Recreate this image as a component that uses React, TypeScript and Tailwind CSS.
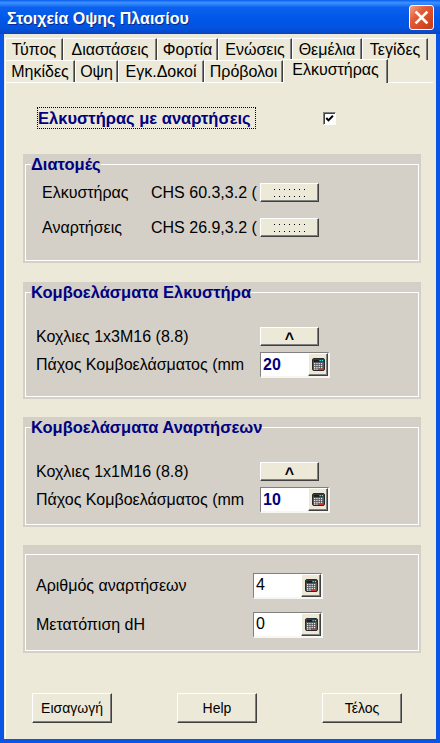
import React from 'react';

const raised =
  'border border-t-white border-l-white border-r-[#404040] border-b-[#404040] shadow-[inset_-1px_-1px_0_#808080] bg-[#ece9d8]';

const row1 = [
  { label: 'Τύπος', w: 'w-[58px]' },
  { label: 'Διαστάσεις', w: 'w-[94px]' },
  { label: 'Φορτία', w: 'w-[61px]' },
  { label: 'Ενώσεις', w: 'w-[74px]' },
  { label: 'Θεμέλια', w: 'w-[70px]' },
  { label: 'Τεγίδες', w: 'w-[66px]' },
];

const row2 = [
  { label: 'Μηκίδες', w: 'w-[70px]' },
  { label: 'Οψη', w: 'w-[43px]' },
  { label: 'Εγκ.Δοκοί', w: 'w-[86px]' },
  { label: 'Πρόβολοι', w: 'w-[79px]' },
  { label: 'Ελκυστήρας', w: 'w-[105px]', selected: true },
];

function Tab({ label, w, selected }: { label: string; w: string; selected?: boolean }) {
  return (
    <div
      className={`${w} flex items-center justify-center whitespace-nowrap border-t border-l border-r border-t-white border-l-white border-r-[#404040] shadow-[inset_-1px_0_0_#808080] text-[16px] text-black ${
        selected ? 'relative z-10 -my-px h-[24px] bg-[#ece9d8] pb-[3px]' : 'h-full'
      }`}
    >
      {label}
    </div>
  );
}

function CalcIcon() {
  const keys = [];
  for (let r = 0; r < 3; r++) {
    for (let c = 0; c < 4; c++) {
      keys.push(<rect key={`${r}-${c}`} x={2 + c * 2.3} y={5 + r * 2} width="1.3" height="1.2" fill="#e8e8e8" />);
    }
  }
  return (
    <svg width="13" height="13" viewBox="0 0 13 13">
      <rect x="0.5" y="0.5" width="12" height="12" rx="1.5" fill="#55585c" stroke="#2a2a2a" />
      <rect x="1.5" y="1.5" width="10" height="2.4" fill="#1c1c1c" />
      <rect x="7.5" y="2" width="1.3" height="1.3" fill="#40f0ff" />
      <rect x="9.7" y="2" width="1.3" height="1.3" fill="#40f0ff" />
      {keys}
      <rect x="6.5" y="10.6" width="4.6" height="1.2" fill="#ff2a2a" />
      <rect x="2" y="10.6" width="1.3" height="1.2" fill="#e8e8e8" />
      <rect x="4.3" y="10.6" width="1.3" height="1.2" fill="#e8e8e8" />
    </svg>
  );
}

function CalcInput({ value, bold }: { value: string; bold?: boolean }) {
  return (
    <div className="flex h-[26px] w-[70px] border-t border-l border-r-2 border-b-2 border-t-[#808080] border-l-[#808080] border-r-[#f7f6f0] border-b-[#f7f6f0] bg-white">
      <div
        className={`flex flex-1 items-center pl-[2px] text-[16px] leading-none ${
          bold ? 'font-bold text-[#000080]' : 'text-black'
        }`}
      >
        {value}
      </div>
      <div className={`${raised} flex w-[20px] items-center justify-center`}>
        <CalcIcon />
      </div>
    </div>
  );
}

function DotButton() {
  const dots = [];
  for (let r = 0; r < 2; r++) {
    for (let c = 0; c < 7; c++) {
      dots.push(<rect key={`${r}-${c}`} x={c * 5} y={r * 7} width="1" height="1" fill="#000" />);
    }
  }
  return (
    <div className={`${raised} flex h-[19px] w-[59px] items-center justify-center`}>
      <svg width="31" height="8" viewBox="0 0 31 8">
        {dots}
      </svg>
    </div>
  );
}

function CaretButton() {
  return (
    <div className={`${raised} flex h-[19px] w-[59px] items-center justify-center pt-[4px] text-[16px] font-bold leading-none`}>
      ^
    </div>
  );
}

function Group({ legend, h, children }: { legend?: string; h: string; children: React.ReactNode }) {
  return (
    <div className={`w-[398px] ${h} bg-[#d4d0c8] px-[2px] pb-[2px] ${legend ? 'pt-[1px]' : 'pt-[9px]'}`}>
      <fieldset className="h-full border border-white pl-[5px]">
        {legend && <legend className="text-[16.5px] font-bold leading-[18px] text-[#000080]">{legend}</legend>}
        {children}
      </fieldset>
    </div>
  );
}

export default function App() {
  return (
    <div className="flex h-[743px] w-[440px] flex-col bg-[#0b55e6] font-['Liberation_Sans',Arial,sans-serif]">
      {/* title bar */}
      <div className="flex h-[34px] shrink-0 items-center justify-between bg-[linear-gradient(to_bottom,#0a5ef0_0%,#3d93ff_8%,#0c61ee_22%,#0057e8_55%,#0352dc_85%,#0a44c0_100%)] pl-[7px] pr-[6px]">
        <span className="mt-[4px] text-[16px] font-bold text-white [text-shadow:1px_1px_0_#0a2a8a]">
          Στοιχεία Οψης Πλαισίου
        </span>
        <div className="flex h-[25px] w-[25px] items-center justify-center rounded-[3px] border border-white bg-[linear-gradient(135deg,#f3a486_0%,#e35d38_35%,#d3451f_75%,#c23d1c_100%)]">
          <svg width="15" height="15" viewBox="0 0 15 15">
            <path d="M2.5 2.5 L12.5 12.5 M12.5 2.5 L2.5 12.5" stroke="#fff" strokeWidth="2.6" strokeLinecap="square" />
          </svg>
        </div>
      </div>

      {/* client */}
      <div className="mx-[4px] mb-[4px] flex flex-1 flex-col bg-[#ece9d8]">
        <div className="pl-[1px] pt-[4px]">
          <div className="flex h-[22px]">
            {row1.map((t) => (
              <Tab key={t.label} label={t.label} w={t.w} />
            ))}
          </div>
          <div className="flex h-[22px]">
            {row2.map((t) => (
              <Tab key={t.label} label={t.label} w={t.w} selected={t.selected} />
            ))}
          </div>
        </div>

        {/* page */}
        <div className="ml-[1px] mr-[3px] flex flex-1 flex-col border-t border-l border-white pl-[17px] text-[16px] text-black">
          <div className="mt-[24px] flex h-[22px] items-center">
            <div className="ml-[14px] flex h-[22px] w-[219px] items-center whitespace-nowrap border border-dotted border-black text-[16.5px] font-bold text-[#000080]">
              Ελκυστήρας με αναρτήσεις
            </div>
            <div className="ml-[67px] flex h-[13px] w-[13px] items-center justify-center border border-t-[#808080] border-l-[#808080] border-r-white border-b-white bg-white shadow-[inset_1px_1px_0_#404040]">
              <svg width="9" height="9" viewBox="0 0 9 9">
                <path d="M1.3 4 L3.5 6.4 L7.9 1.8" stroke="#000" strokeWidth="2" fill="none" />
              </svg>
            </div>
          </div>

          <div className="mt-[25px]">
            <Group legend="Διατομές" h="h-[109px]">
              <div className="mt-[10px] flex h-[19px] items-center">
                <span className="ml-[11px] w-[109px]">Ελκυστήρας</span>
                <span className="w-[109px] overflow-hidden whitespace-nowrap">CHS 60.3,3.2 (</span>
                <DotButton />
              </div>
              <div className="mt-[16px] flex h-[19px] items-center">
                <span className="ml-[11px] w-[109px]">Αναρτήσεις</span>
                <span className="w-[109px] overflow-hidden whitespace-nowrap">CHS 26.9,3.2 (</span>
                <DotButton />
              </div>
            </Group>
          </div>

          <div className="mt-[19px]">
            <Group legend="Κομβοελάσματα Ελκυστήρα" h="h-[117px]">
              <div className="mt-[26px] flex h-[19px] items-center">
                <span className="ml-[5px] w-[224px]">Κοχλιες 1x3M16 (8.8)</span>
                <CaretButton />
              </div>
              <div className="mt-[6px] flex h-[26px] items-center">
                <span className="ml-[5px] w-[224px] overflow-hidden whitespace-nowrap">Πάχος Κομβοελάσματος (mm</span>
                <CalcInput value="20" bold />
              </div>
            </Group>
          </div>

          <div className="mt-[18px]">
            <Group legend="Κομβοελάσματα Αναρτήσεων" h="h-[110px]">
              <div className="mt-[26px] flex h-[19px] items-center">
                <span className="ml-[5px] w-[224px]">Κοχλιες 1x1M16 (8.8)</span>
                <CaretButton />
              </div>
              <div className="mt-[6px] flex h-[26px] items-center">
                <span className="ml-[5px] w-[224px] overflow-hidden whitespace-nowrap">Πάχος Κομβοελάσματος (mm</span>
                <CalcInput value="10" bold />
              </div>
            </Group>
          </div>

          <div className="mt-[18px]">
            <Group h="h-[108px]">
              <div className="mt-[17px] flex h-[27px] items-center">
                <span className="ml-[5px] w-[217px]">Αριθμός αναρτήσεων</span>
                <CalcInput value="4" />
              </div>
              <div className="mt-[12px] flex h-[27px] items-center">
                <span className="ml-[5px] w-[217px]">Μετατόπιση dH</span>
                <CalcInput value="0" />
              </div>
            </Group>
          </div>

          <div className="ml-[9px] mt-[40px] flex gap-[65px]">
            {['Εισαγωγή', 'Help', 'Τέλος'].map((b) => (
              <button key={b} className={`${raised} h-[30px] w-[80px] text-[14px] text-black`}>
                {b}
              </button>
            ))}
          </div>
        </div>
      </div>
    </div>
  );
}
